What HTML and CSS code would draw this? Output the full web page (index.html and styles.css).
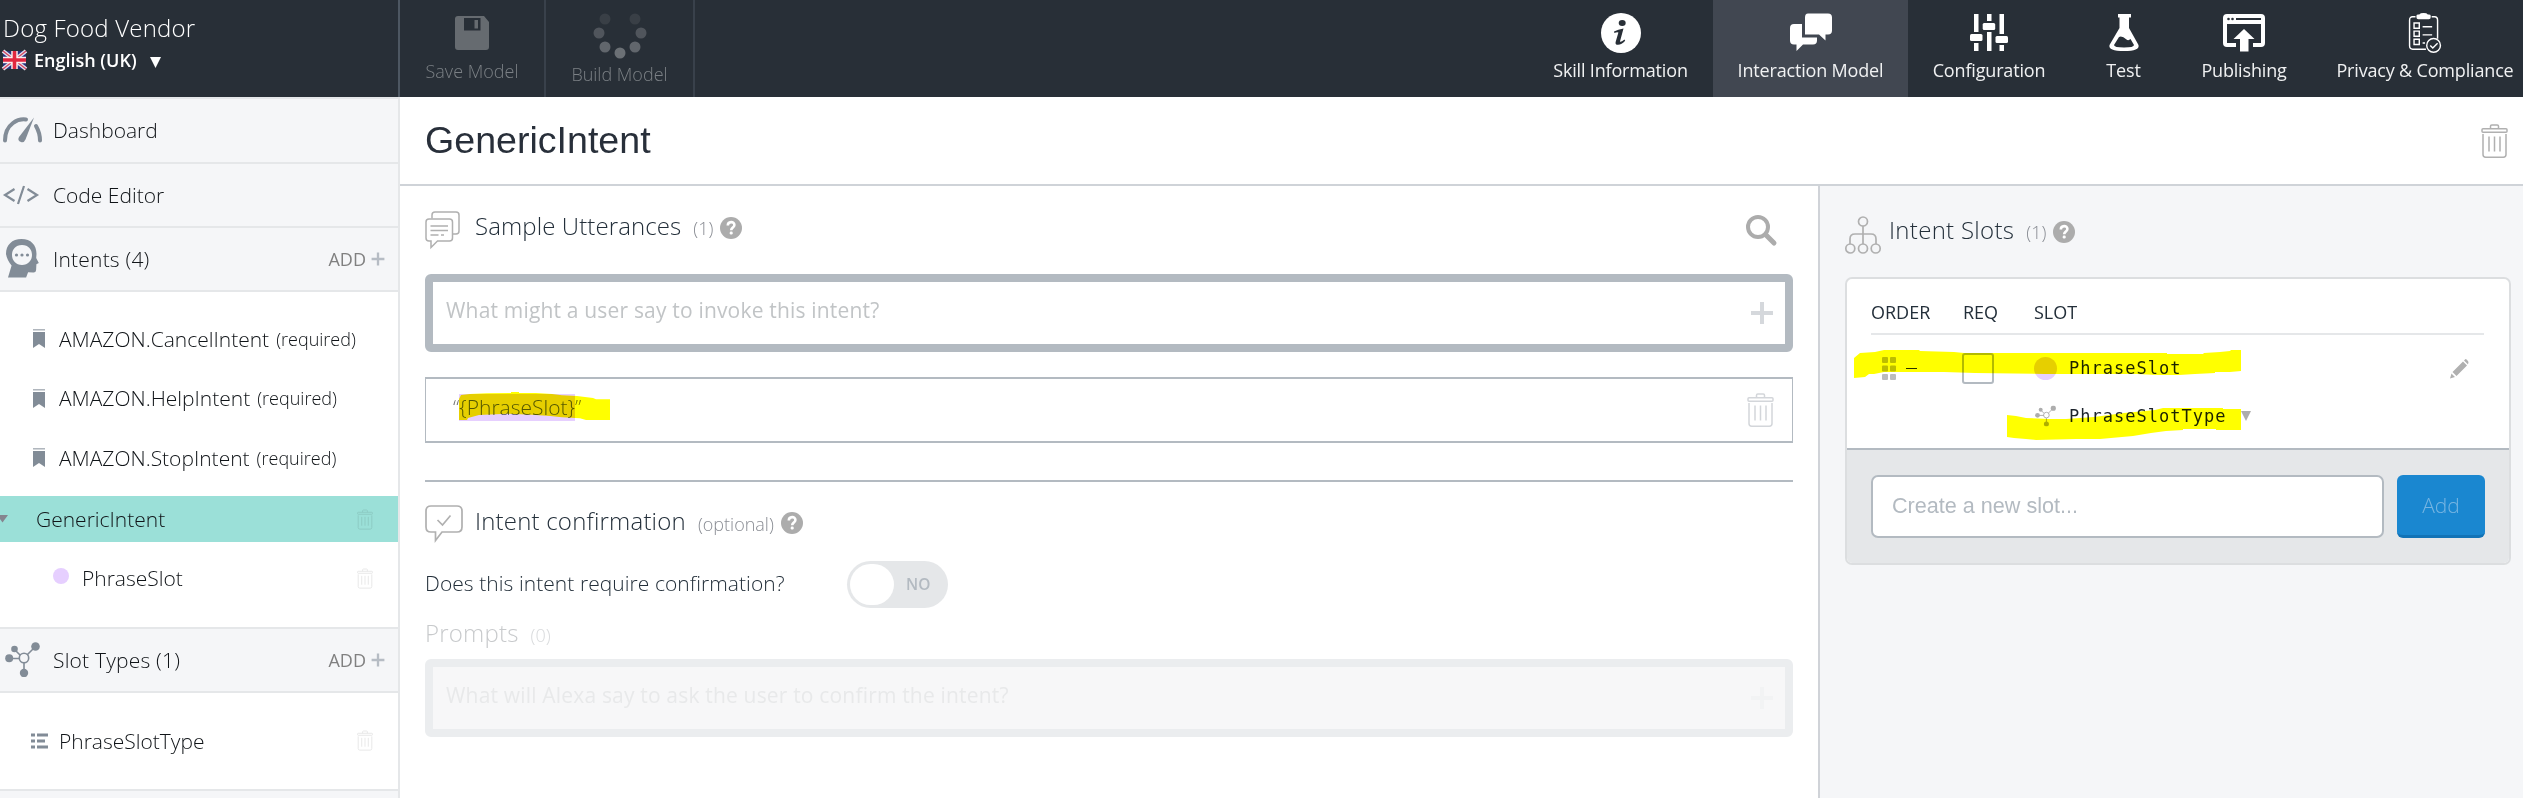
FILE: index.html
```html
<!DOCTYPE html>
<html lang="en">
<head>
<meta charset="utf-8">
<title>Dog Food Vendor</title>
<link rel="stylesheet" href="styles.css">
</head>
<body>
<svg class="defs" width="0" height="0">
  <symbol id="trash" viewBox="0 0 27 34"><g fill="none" stroke="currentColor" stroke-width="1.5"><rect x="1" y="4.8" width="25" height="3.4" rx="1"/><path d="M9.5 4.8V2.3q0-1.300 1.300-1.300h5.400q1.300 0 1.300 1.300V4.800M2 10v20.500q0 2.700 2.700 2.700h17.600q2.700 0 2.700-2.700V10M8 12.500v15M13.500 12.500v15M19 12.500v15"/></g></symbol>
  <symbol id="plus" viewBox="0 0 24 24"><path d="M12 1v22M1 12h22" stroke="currentColor" stroke-width="4"/></symbol>
  <symbol id="help" viewBox="0 0 22 22"><circle cx="11" cy="11" r="11" fill="#acacac"/><path d="M7.800 8.600c0-4.600 6.600-4.500 6.600-.7 0 2.500-3.200 2.600-3.200 5.300" fill="none" stroke="#fff" stroke-width="2.600"/><rect x="9.700" y="14.500" width="3" height="3" rx="1.200" fill="#fff"/></symbol>
  <symbol id="mark" viewBox="0 0 12 19"><path d="M0 3h12v16l-6-4-6 4z" fill="#828c97"/><path d="M0 .8h12" stroke="#a7aeb6" stroke-width="1.400"/></symbol>
  <symbol id="nodes" viewBox="0 0 35 35"><g stroke="currentColor" stroke-width="1.600" fill="none"><path d="M4 16.500h11M9 7l6 6M30 5l-8 8M19 21v10"/><circle cx="19" cy="16" r="4.700"/></g><g fill="currentColor"><circle cx="4.200" cy="16.300" r="4"/><circle cx="9.500" cy="7" r="3.300"/><circle cx="30.500" cy="4.500" r="4.300"/><circle cx="19" cy="31" r="4.200"/></g></symbol>
</svg>

<header class="top">
  <div class="brand">
    <div class="skill">Dog Food Vendor</div>
    <div class="locale">
      <svg class="flag" width="23" height="18" viewBox="0 0 23 18"><rect width="23" height="18" fill="#27337e"/><path d="M0 0l23 18M23 0L0 18" stroke="#dfe0ee" stroke-width="4"/><path d="M0 0l23 18M23 0L0 18" stroke="#d8455f" stroke-width="1.300"/><path d="M11.500 0v18M0 9h23" stroke="#fbeef0" stroke-width="6.500"/><path d="M11.500 0v18M0 9h23" stroke="#e02640" stroke-width="3.600"/></svg>
      <span class="lang">English (UK)</span>
      <svg class="caret" width="11" height="11" viewBox="0 0 11 11"><path d="M0 0h11L5.500 11z" fill="#fff"/></svg>
    </div>
  </div>
  <div class="tool save">
    <svg width="34" height="34" viewBox="0 0 34 34"><path fill="#666b70" fill-rule="evenodd" d="M3 0h26l5 6v25q0 3-3 3H3q-3 0-3-3V3q0-3 3-3zM9 2v12.500h16.500V2z"/><rect x="19.500" y="4" width="3.500" height="8.500" fill="#666b70"/></svg>
    <span>Save Model</span>
  </div>
  <div class="tool build">
    <svg width="54" height="46" viewBox="0 0 54 46"><g fill="#6b7075"><circle cx="27" cy="40" r="5.500"/><circle cx="12" cy="34" r="5.500" opacity=".85"/><circle cx="42" cy="34" r="5.500" opacity=".85"/><circle cx="6" cy="20" r="5.500" opacity=".6"/><circle cx="48" cy="20" r="5.500" opacity=".6"/><circle cx="12" cy="6" r="5.500" opacity=".25"/><circle cx="42" cy="6" r="5.500" opacity=".25"/></g></svg>
    <span>Build Model</span>
  </div>
  <nav class="nav">
    <a class="tab"><svg width="40" height="40" viewBox="0 0 40 40"><circle cx="20" cy="20" r="20" fill="#fff"/><g fill="#282f37"><ellipse cx="21.200" cy="10" rx="3.500" ry="3"/><path d="M13 18.500q4-2 9.500-3l-3.600 13.300q1.500.3 4.600-2.300l.7 1.200q-4 4.600-8.200 4-2-.4-1.300-3l2.700-9.200q-1.500-.6-4 .5z"/></g></svg><span>Skill Information</span></a>
    <a class="tab on"><svg width="42" height="40" viewBox="0 0 42 40"><path fill="#fff" d="M4 11h8v13.500h15v3q0 4-4 4H13L6.500 38v-6.500H4q-4 0-4-4V15q0-4 4-4z"/><path fill="#fff" d="M18 .5h20q4 0 4 4v13q0 4-4 4h-2.500v6l-6.500-6H15V4.500q0-4 3-4z"/></svg><span>Interaction Model</span></a>
    <a class="tab"><svg width="38" height="40" viewBox="0 0 38 40"><g fill="#fff"><path d="M4 1h4.500v18H4zM4 30h4.500v8H4zM17 1h4.500v7H17zM17 19h4.500v19H17zM29.500 1H34v20h-4.500zM29.500 32H34v6h-4.500z"/><rect y="21" width="12.500" height="7" rx="1.500"/><rect x="12.700" y="10" width="12.500" height="7" rx="1.500"/><rect x="25.500" y="23" width="12.500" height="7" rx="1.500"/></g></svg><span>Configuration</span></a>
    <a class="tab"><svg width="30" height="40" viewBox="0 0 30 40"><path fill="#fff" fill-rule="evenodd" d="M9 1h13v3.500h-2V15l9.500 17q1.500 6-14.500 6T.5 32L10.500 15V4.500H9zM10 24L5 32q0 2.500 10 2.500t10-2.500l-3.500-6q-2 2-4 .5-4.500-4-7.500-2.500z"/></svg><span>Test</span></a>
    <a class="tab"><svg width="42" height="40" viewBox="0 0 42 40"><path fill="#fff" fill-rule="evenodd" d="M4 1h34q4 0 4 4v25q0 4-4 4h-8v-4h8V11H4v19h9v4H4q-4 0-4-4V5q0-4 4-4zM13 5v2h25V5z"/><circle cx="5.500" cy="6" r="1.300" fill="#282f37"/><circle cx="9.500" cy="6" r="1.300" fill="#282f37"/><path fill="#fff" d="M21 16l10.500 10H25.500v12.500h-8.500V26H10.500z"/></svg><span>Publishing</span></a>
    <a class="tab last"><svg width="34" height="42" viewBox="0 0 34 42"><g fill="none" stroke="#fff" stroke-width="1.500"><path d="M7 4H4Q.8 4 .8 7.500v27Q.8 38 4 38h14M24 4h3q3.200 0 3.200 3.500V27"/><path d="M5.500 10.500h5.500v5.500H5.500zM5.500 19h5.500v5.500H5.500zM5.500 27.500h5.500V33H5.500zM14.500 14.500h10M14.500 23h10M14.500 31.500h2.500"/><circle cx="26" cy="34" r="7.200"/><path d="M22.500 34l2.700 2.800 5-5"/></g><path fill="#fff" d="M8 3q0-1.500 2-1.500h1Q12 0 15.500 0T20 1.500h1q2 0 2 1.500v1.500q0 2-2 2H10q-2 0-2-2z"/></svg><span>Privacy &amp; Compliance</span></a>
  </nav>
</header>

<div class="body">
  <aside class="side">
    <div class="sec first"><span class="ic"><svg width="39" height="26" viewBox="0 0 39 26"><g fill="none" stroke="#828c97" stroke-width="4" stroke-linecap="round"><path d="M2 23.500Q2 12 10 6q6-4.500 13-3.500"/><path d="M33 9q4 7 4 14.500"/></g><path d="M31 .5L22.500 22.500q-1.500 3.500-4.500 2.500-4-1.500-2-5z" fill="#828c97"/></svg></span><span>Dashboard</span></div>
    <div class="sec"><span class="ic"><svg width="36" height="20" viewBox="0 0 36 20"><path d="M11.500 4L2 10l9.500 6M24.500 4l9.500 6-9.500 6M21 1l-6 18" fill="none" stroke="#828c97" stroke-width="2.200"/></svg></span><span>Code Editor</span></div>
    <div class="sec"><span class="ic head"><svg width="33" height="39" viewBox="0 0 33 39"><path fill="#828c97" fill-rule="evenodd" d="M15.500 0C25 0 30.500 6 30.500 15l-.3 4 2.600 5-2.400 1.200-.3 6q-.3 2.600-3 2.300l-5-.2-2 5.200H2l3.600-12Q1 21 0 15C0 6 6 0 15.500 0zM16 6C9.500 6 6 10.500 6 16s4 10 10 10 10-4.500 10-10S22.500 6 16 6z"/><circle cx="10.500" cy="16" r="1.600" fill="#828c97"/><circle cx="16" cy="16" r="1.600" fill="#828c97"/><circle cx="21.500" cy="16" r="1.600" fill="#828c97"/></svg></span><span class="wide">Intents (4)</span><span class="add">ADD</span><svg class="plus" width="14" height="14"><use href="#plus"/></svg></div>
    <div class="list intents">
      <div class="item"><svg width="12" height="19"><use href="#mark"/></svg><span>AMAZON.CancelIntent</span><small>(required)</small></div>
      <div class="item"><svg width="12" height="19"><use href="#mark"/></svg><span>AMAZON.HelpIntent</span><small>(required)</small></div>
      <div class="item"><svg width="12" height="19"><use href="#mark"/></svg><span>AMAZON.StopIntent</span><small>(required)</small></div>
      <div class="item cur"><svg width="8" height="8" viewBox="0 0 8 8"><path d="M-3 0H8L2.500 7.500z" fill="#85858f"/></svg><span>GenericIntent</span><svg class="bin" width="16" height="21"><use href="#trash"/></svg></div>
      <div class="item slot"><i class="dot"></i><span>PhraseSlot</span><svg class="bin" width="16" height="21"><use href="#trash"/></svg></div>
    </div>
    <div class="sec types"><span class="ic net"><svg width="35" height="35"><use href="#nodes"/></svg></span><span class="wide">Slot Types (1)</span><span class="add">ADD</span><svg class="plus" width="14" height="14"><use href="#plus"/></svg></div>
    <div class="list typelist">
      <div class="item"><svg width="17" height="16" viewBox="0 0 17 16"><path d="M0 2h4M0 8h4M0 14h4M6 2h11M6 8h8M6 14h11" stroke="#828c97" stroke-width="2.800"/></svg><span>PhraseSlotType</span><svg class="bin" width="16" height="21"><use href="#trash"/></svg></div>
    </div>
  </aside>

  <main class="main">
    <div class="title"><h1>GenericIntent</h1><svg width="27" height="34"><use href="#trash"/></svg></div>
    <div class="cols">
      <section class="left">
        <div class="hd utter">
          <svg class="hic" width="35" height="38" viewBox="0 0 35 38"><g fill="none" stroke="#b0b0b0" stroke-width="1.500"><path d="M7 7.500V4q0-3 3-3h21q3 0 3 3v16q0 3-3 3h-3.500"/><path d="M4 8h20.500q3 0 3 3v16q0 3-3 3H12.500L6 36.500V30H4q-3 0-3-3V11q0-3 3-3zM5.500 15H23M5.500 19.500H23M5.500 24h8M16 24h3"/></g></svg>
          <h2>Sample Utterances</h2><span class="cnt">(1)</span><svg class="help" width="22" height="22"><use href="#help"/></svg>
          <svg class="find" width="31" height="31" viewBox="0 0 31 31"><circle cx="12" cy="12" r="10" fill="none" stroke="#acacac" stroke-width="4"/><path d="M19.500 19.500l8.500 8.500" stroke="#acacac" stroke-width="5" stroke-linecap="round"/></svg>
        </div>
        <div class="box"><span>What might a user say to invoke this intent?</span><svg width="24" height="24"><use href="#plus"/></svg></div>
        <div class="row"><span class="utt">“<mark>{PhraseSlot}</mark>”</span><svg width="27" height="34"><use href="#trash"/></svg>
          <svg class="ink" width="151" height="30" viewBox="459 391 151 30"><path fill="#ff0" d="M459 420V399l2-4 9-1 17-.7 24-.3v-1h8v1h17l16 1 10 1.300 15 .7 16 2 3 1.300h14V420h-24l-6-1.700-18-1-12-1.300-18-1.300-25-1-28 1.300-11 3-1 2z"/></svg></div>
        <hr>
        <div class="hd conf">
          <svg class="hic" width="38" height="38" viewBox="0 0 38 38"><g fill="none" stroke="#b0b0b0" stroke-width="1.700"><path d="M6 1h26q5 0 5 5v16q0 5-5 5H17l-6.500 8.500V27H6q-5 0-5-5V6q0-5 5-5z"/><path d="M12.500 15l5 5 8-9.500"/></g></svg>
          <h2>Intent confirmation</h2><span class="cnt">(optional)</span><svg class="help" width="22" height="22"><use href="#help"/></svg>
        </div>
        <div class="ask"><span class="q">Does this intent require confirmation?</span><span class="toggle"><i></i><b>NO</b></span></div>
        <div class="off">
          <div class="prom"><span class="h-pr">Prompts</span><span class="cnt">(0)</span></div>
          <div class="box"><span>What will Alexa say to ask the user to confirm the intent?</span><svg width="24" height="24"><use href="#plus"/></svg></div>
        </div>
      </section>
      <section class="right">
        <div class="hd slots">
          <svg class="hic" width="36" height="38" viewBox="0 0 36 38"><g fill="none" stroke="#b0b0b0" stroke-width="1.700"><circle cx="18" cy="5.500" r="4.500"/><path d="M18 10v18M5 28v-5q0-5 5-5h16q5 0 5 5v5"/><circle cx="5.300" cy="32.500" r="4.500"/><circle cx="18" cy="32.500" r="4.500"/><circle cx="30.700" cy="32.500" r="4.500"/></g></svg>
          <h2>Intent Slots</h2><span class="cnt">(1)</span><svg class="help" width="22" height="22"><use href="#help"/></svg>
        </div>
        <div class="card">
          <div class="thead"><span class="c-o">ORDER</span><span class="c-r">REQ</span><span>SLOT</span></div>
          <div class="srow">
            <svg width="14" height="23" viewBox="0 0 14 23"><g fill="#bcbcbc"><rect width="6" height="6" rx="1"/><rect x="8" width="6" height="6" rx="1"/><rect y="8.500" width="6" height="6" rx="1"/><rect x="8" y="8.500" width="6" height="6" rx="1"/><rect y="17" width="6" height="6" rx="1"/><rect x="8" y="17" width="6" height="6" rx="1"/></g></svg>
            <i class="dash"></i><i class="chk"></i><i class="dot big"></i><code>PhraseSlot</code>
            <svg class="pen" width="19" height="20" viewBox="0 0 19 20"><path fill="#b0b0b0" d="M0 19.500l1.500-5 3.500 3.500zM2.500 13L13 2.500l4 4L6.500 17zM14 1.500l1.500-1.500q1.500 0 3 3L18 5.500z"/></svg>
          </div>
          <div class="srow two"><svg class="net2" width="21" height="22" viewBox="0 0 35 35"><use href="#nodes" width="35" height="35"/></svg><code>PhraseSlotType</code><svg class="tri" width="10" height="10" viewBox="0 0 10 10"><path d="M0 0h10L5 10z" fill="#adadad"/></svg></div>
          <svg class="ink hl" width="400" height="100" viewBox="1850 345 400 100"><path fill="#ff0" d="M1854 378v-20l6-5 15-1 9-2h35l1 1 34 1 10 1h203v1h36l1-1 16-1 10-1 1-1h10v21l-11 1h-15v1l-20 1-16 1h-22l-20-1h-92l-70-1-31-1-60 0-10 2h-5l-4 3zM2007 437v-22l9 1 10 2 23 1h17l28-2 30-4 31-3 8-2h60v1h18v21h-25v-1h-33v1l-17 1-15 2-18 3-33 3-24 0-40 1-10-1-12-1z"/></svg>
          <div class="new"><div class="inp">Create a new slot...</div><button>Add</button></div>
        </div>
      </section>
    </div>
  </main>
</div>
</body>
</html>
```
FILE: styles.css
```css
* { box-sizing: border-box; }
body { margin: 0; width: 2523px; height: 798px; overflow: hidden; background: #fff; color: #232f3a; font: 300 21px/28px "Open Sans", "Noto Sans", sans-serif; }
svg { display: block; flex: none; overflow: visible; }
.defs { position: absolute; }
span, h1, h2, code, small { white-space: nowrap; }
i { display: block; flex: none; }

.top { display: flex; height: 97px; background: #282f37; color: #fff; }
.brand { width: 400px; padding: 11px 0 0 3px; border-right: 2px solid #4d5762; }
.skill { font-size: 24px; line-height: 34px; letter-spacing: .2px; }
.locale { display: flex; align-items: center; height: 30px; }
.lang { margin: 0 13px 0 8px; font-size: 18px; font-weight: 600; }
.caret { margin-top: 4px; }
.tool { display: flex; flex-direction: column; align-items: center; border-right: 2px solid #39414b; color: #7b8085; font-size: 18px; }
.save { width: 146px; padding-top: 16px; }
.save span { margin-top: 7px; }
.build { width: 149px; padding-top: 13px; }
.build span { margin-top: 1px; }
.nav { display: grid; grid-template-columns: 185px 195px 162px 107px 134px 212px; margin-left: auto; }
.tab { display: flex; flex-direction: column; align-items: center; padding-top: 13px; font-size: 18px; font-weight: 400; letter-spacing: -.17px; color: #f0f1f2; }
.tab svg { height: 40px; }
.tab span { margin-top: 3px; }
.on { background: #414751; }
.last { padding-left: 16px; }

.body { display: flex; height: 701px; }
.side { width: 400px; border-right: 2px solid #e5e7e9; background: #f5f6f8; color: #101418; }
.sec { display: flex; align-items: center; height: 64px; border-top: 2px solid #e5e7e9; padding: 0 13px 1px 0; }
.first { height: 65px; padding-bottom: 2px; }
.ic { display: flex; width: 53px; padding-left: 3px; }
.ic.head { padding-left: 6px; }
.ic.net { padding-left: 5px; color: #828c97; }
.wide { letter-spacing: .2px; }
.add { margin-left: auto; margin-right: 5px; font-size: 18px; color: #808080; font-weight: 400; }
.plus { color: #b6bcc4; }
.list { background: #fff; border-top: 2px solid #e5e7e9; }
.intents { height: 337px; padding-top: 17px; }
.item { display: flex; align-items: center; height: 59.500px; padding: 0 25px 0 33px; }
.item span { margin-left: 14px; }
.item small { margin-left: 7px; font-size: 18px; }
.cur { height: 46px; margin: 8.500px 0 6.500px; padding-left: 0; background: #9be0d8; }
.cur span { margin: -1px 0 0 28px; }
.bin { margin-left: auto; color: #000; opacity: .1; }
.dot { width: 16px; height: 16px; border-radius: 50%; background: #e6cfff; }
.slot { padding-left: 53px; }
.slot .dot { margin-top: -4px; }
.slot span { margin-left: 13px; }
.typelist { height: 100px; padding-top: 18px; border-bottom: 2px solid #e5e7e9; }
.typelist .item { padding-left: 31px; }
.typelist span { margin-left: 11px; }

.main { flex: 1; display: flex; flex-direction: column; }
.title { display: flex; align-items: center; justify-content: space-between; height: 89px; padding: 0 15px 0 25px; border-bottom: 2px solid #cfd3d8; color: #b0b0b0; }
h1 { margin: -2px 0 0; font: 400 37.600px/40px "Liberation Sans", Arial, sans-serif; color: #282f3a; }
.cols { display: flex; flex: 1; }
.left { width: 1420px; border-right: 2px solid #d0d3d8; padding: 0 25px; }
.right { flex: 1; padding: 0 12px 0 25px; background: #f5f6f8; }
.hd { display: flex; align-items: center; }
h2 { margin: 0; font-size: 24px; font-weight: 300; line-height: 34px; letter-spacing: .2px; }
.cnt { color: #8a8d94; font-size: 18px; margin: 0 7px 0 12px; }
.utter { height: 88px; }
.utter .hic { margin-right: 15px; }
.utter h2 { margin-bottom: 9px; letter-spacing: .1px; }
.utter .cnt { margin-bottom: 4px; }
.utter .help { margin-bottom: 5px; }
.hic { margin-right: 12px; }
.find { margin: 0 16px 0 auto; }
.box { display: flex; align-items: center; justify-content: space-between; height: 78px; padding: 0 11px 0 13px; border: 8px solid #b3bac1; border-radius: 6px; color: #c1c4c6; font-weight: 400; letter-spacing: .18px; background: #fff; }
.box span { margin-bottom: 7px; }
.box svg { color: #d5d8dc; }
.row { position: relative; display: flex; align-items: center; justify-content: space-between; height: 66px; margin-top: 25px; padding: 0 18px 0 27px; border: 2px solid #b3bac1; border-width: 2px 1px; color: #d3d6da; }
.utt { color: #777; margin-top: -6px; }
mark { display: inline-block; line-height: 27px; background: #e6cfff; color: #55585c; }
.ink { position: absolute; mix-blend-mode: multiply; }
.row .ink { left: 33px; top: 12px; }
hr { height: 2px; margin: 37px 0 0; border: 0; background: #b3bac1; }
.conf { height: 84px; }
.conf h2 { margin-bottom: 6px; }
.conf .cnt { margin-bottom: 1px; }
.conf .help { margin-bottom: 2px; }
.ask { display: flex; align-items: center; height: 36px; letter-spacing: .06px; }
.q { width: 422px; margin-bottom: 3px; }
.toggle { display: flex; align-items: center; width: 101px; height: 47px; padding: 3px; border-radius: 24px; background: #e5e7e9; }
.toggle i { width: 44px; height: 41px; border-radius: 21px; background: #fff; }
.toggle b { margin-left: 12px; color: #b3bac1; font-size: 15.500px; font-weight: 600; }
.prom { display: flex; align-items: center; height: 57px; padding-top: 5px; }
.h-pr { font-size: 24px; letter-spacing: .2px; }
.prom .cnt { margin-top: 3px; }
.off .h-pr { color: #c8cacc; }
.off .cnt { color: #d8dadc; }
.off .box { border-color: #ebedef; background: #f7f7f8; color: #e8e9ea; }
.off .box svg { color: #f2f3f4; }

.slots { height: 91px; padding-top: 4px; }
.slots .hic { margin: 3px 8px 0 0; }
.slots h2 { margin-top: -7px; letter-spacing: .3px; }
.slots .cnt { margin-top: -3px; }
.slots .help { margin-top: -3px; }
.card { position: relative; height: 288px; border: 2px solid #dcdee0; border-radius: 7px; background: #fff; overflow: hidden; }
.thead { display: flex; height: 56px; margin: 0 25px 0 24px; padding: 19px 0 0; border-bottom: 2px solid #e5e7e9; font-size: 18px; font-weight: 400; }
.c-o { width: 92px; }
.c-r { width: 71px; }
.srow { display: flex; align-items: center; height: 66px; padding: 0 40px 0 35px; }
.dash { width: 11px; height: 1px; margin: 0 45px 0 10px; background: #282f37; }
.chk { width: 32px; height: 31px; margin-right: 40px; border: 2px solid #b3bac1; border-radius: 3px; }
.dot.big { width: 23px; height: 23px; }
code { margin-left: 12px; font: 400 17px/24px "DejaVu Sans Mono", monospace; letter-spacing: 1.020px; color: #1c232b; }
.pen { margin: 2px 0 0 auto; }
.two { height: 47px; padding: 0 0 17px 188px; }
.net2 { color: #adadad; }
.two code { margin-left: 13px; }
.tri { margin-left: 14px; }
.hl { left: 3px; top: 66px; }
.new { display: flex; gap: 13px; height: 116px; padding: 25px 24px 25px; border-top: 2px solid #b3bac1; background: #e5e7e9; }
.inp { width: 513px; height: 63px; padding: 0 19px; border: 2px solid #b3bac1; border-radius: 7px; background: #fff; color: #b3bac1; font: 400 21.600px/58px "Liberation Sans", Arial, sans-serif; }
button { width: 88px; height: 63px; padding: 0; border: 0; border-bottom: 3px solid #1273b6; border-radius: 6px; background: #1a87d0; color: #76b5e2; font: 300 21px/40px "Open Sans", sans-serif; }
```
